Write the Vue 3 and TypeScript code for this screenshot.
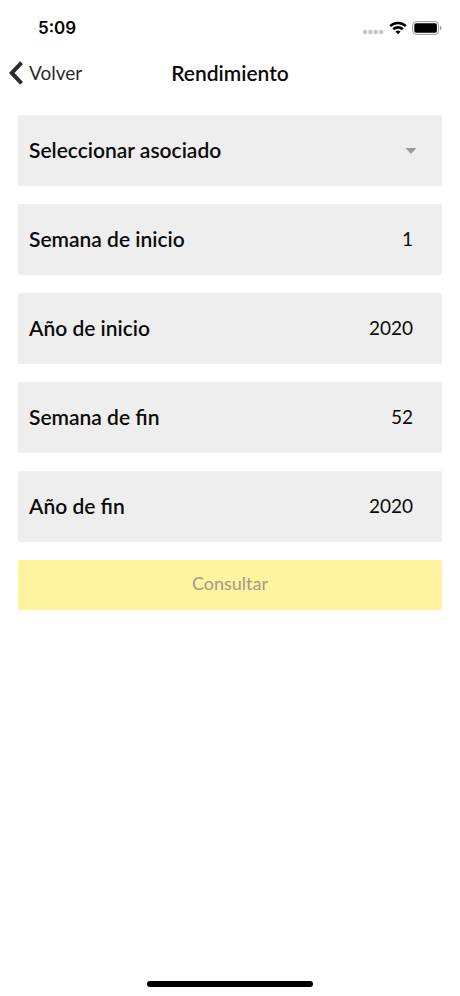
<script setup lang="ts">
import { computed, reactive, ref } from 'vue'

interface Field {
  id: 'startWeek' | 'startYear' | 'endWeek' | 'endYear'
  label: string
}

const fields: Field[] = [
  { id: 'startWeek', label: 'Semana de inicio' },
  { id: 'startYear', label: 'Año de inicio' },
  { id: 'endWeek', label: 'Semana de fin' },
  { id: 'endYear', label: 'Año de fin' },
]

const associate = ref('')
const values = reactive<Record<Field['id'], string>>({
  startWeek: '1',
  startYear: '2020',
  endWeek: '52',
  endYear: '2020',
})

const canSubmit = computed(() => associate.value !== '')
</script>

<template>
  <div class="screen">
    <div class="status">
      <time class="clock">5:09</time>
      <div class="indicators">
        <svg class="signal" viewBox="0 0 22 6" aria-hidden="true">
          <circle cx="3" cy="3" r="2.2" />
          <circle cx="8.4" cy="3" r="2.2" />
          <circle cx="13.8" cy="3" r="2.2" />
          <circle cx="19.2" cy="3" r="2.2" />
        </svg>
        <svg class="wifi" viewBox="0 0 18 14" aria-hidden="true">
          <path d="M1.2 5.1a11.3 11.3 0 0 1 15.6 0" />
          <path d="M4.2 8.3a7 7 0 0 1 9.6 0" />
          <path class="dot" d="M9 13.2 6.4 10.6a3.8 3.8 0 0 1 5.2 0z" />
        </svg>
        <svg class="battery" viewBox="0 0 30 14" aria-hidden="true">
          <rect class="shell" x="0.6" y="0.6" width="26" height="12.8" rx="3.6" />
          <rect x="2.3" y="2.3" width="22.6" height="9.4" rx="1.8" />
          <path class="cap" d="M28 4.8v4.4c1-.4 1.6-1.2 1.6-2.2S29 5.2 28 4.8z" />
        </svg>
      </div>
    </div>

    <header class="navbar">
      <button type="button" class="back">
        <svg class="chevron" viewBox="0 0 14 24" aria-hidden="true">
          <path d="M12.6 1.6 2.7 12l9.9 10.4" />
        </svg>
        Volver
      </button>
      <h1 class="title">Rendimiento</h1>
    </header>

    <form class="form" @submit.prevent>
      <div class="field">
        <label class="label" for="associate">Seleccionar asociado</label>
        <div class="picker">
          <select id="associate" v-model="associate" class="select">
            <option value=""></option>
          </select>
          <svg class="caret" viewBox="0 0 12 6" aria-hidden="true">
            <path d="M0.5 0h11L6 6z" />
          </svg>
        </div>
      </div>
      <div v-for="field in fields" :key="field.id" class="field">
        <label class="label" :for="field.id">{{ field.label }}</label>
        <input :id="field.id" v-model="values[field.id]" class="value" type="text" inputmode="numeric" />
      </div>
      <button type="submit" class="submit" :disabled="!canSubmit">Consultar</button>
    </form>

    <div class="home"></div>
  </div>
</template>

<style>
body {
  background: #fff;
}
</style>

<style scoped>
.screen {
  display: flex;
  flex-direction: column;
  box-sizing: border-box;
  min-height: 100vh;
  padding-bottom: 9px;
  background: #fff;
  color: #0b0b0b;
  font-family: Lato, 'Liberation Sans', sans-serif;
  font-size: 19px;
  line-height: 24px;
}

.status {
  display: flex;
  align-items: center;
  justify-content: space-between;
  height: 48px;
  padding: 8px 18px 0 38px;
  box-sizing: border-box;
}

.clock {
  color: #000;
  font-family: Inter, 'Liberation Sans', sans-serif;
  font-size: 17px;
  font-weight: 600;
}

.indicators {
  display: flex;
  align-items: center;
  gap: 5px;
}

.signal {
  width: 22px;
  height: 6px;
  margin-top: 8px;
  fill: #c4c4c4;
}

.wifi {
  width: 18px;
  height: 14px;
  fill: none;
  stroke: #000;
  stroke-width: 2.6;
}

.wifi .dot {
  fill: #000;
  stroke: none;
}

.battery {
  width: 30px;
  height: 14px;
  fill: #000;
}

.battery .shell {
  fill: none;
  stroke: #999;
  stroke-width: 1;
}

.battery .cap {
  fill: #999;
}

.navbar {
  display: grid;
  grid-template-columns: 1fr auto 1fr;
  align-items: center;
  height: 50px;
  padding: 0 9px;
}

.back {
  display: flex;
  align-items: center;
  justify-self: start;
  gap: 6px;
  padding: 0;
  border: 0;
  background: none;
  color: #2b2b2b;
  font: inherit;
}

.chevron {
  width: 14px;
  height: 24px;
  fill: none;
  stroke: #2b2b2b;
  stroke-width: 4;
}

.title {
  margin: 0;
  font-size: 21px;
  font-weight: 600;
}

.form {
  display: flex;
  flex-direction: column;
  gap: 18px;
  padding: 17px 18px;
}

.field {
  display: flex;
  align-items: center;
  justify-content: space-between;
  height: 71px;
  padding: 0 29px 0 11px;
  border-radius: 2px;
  background: #eee;
}

.label {
  flex: none;
  padding-bottom: 1px;
  font-size: 21px;
  font-weight: 600;
}

.value {
  flex: 1;
  min-width: 0;
  padding: 0 0 1px;
  border: 0;
  outline: 0;
  background: none;
  color: #0b0b0b;
  font: inherit;
  text-align: right;
}

.picker {
  display: flex;
  flex: 1;
  align-items: center;
  margin-right: -4px;
}

.select {
  flex: 1;
  min-width: 0;
  height: 40px;
  border: 0;
  outline: 0;
  appearance: none;
  background: none;
  font: inherit;
}

.caret {
  width: 12px;
  height: 6px;
  fill: #999;
  pointer-events: none;
}

.submit {
  height: 50px;
  padding: 0 0 4px;
  border: 0;
  border-radius: 2px;
  background: #fff3a0;
  color: #a19a88;
  font: inherit;
  font-size: 18px;
}

.home {
  align-self: center;
  width: 36%;
  height: 6px;
  margin-top: auto;
  border-radius: 3px;
  background: #000;
}
</style>
